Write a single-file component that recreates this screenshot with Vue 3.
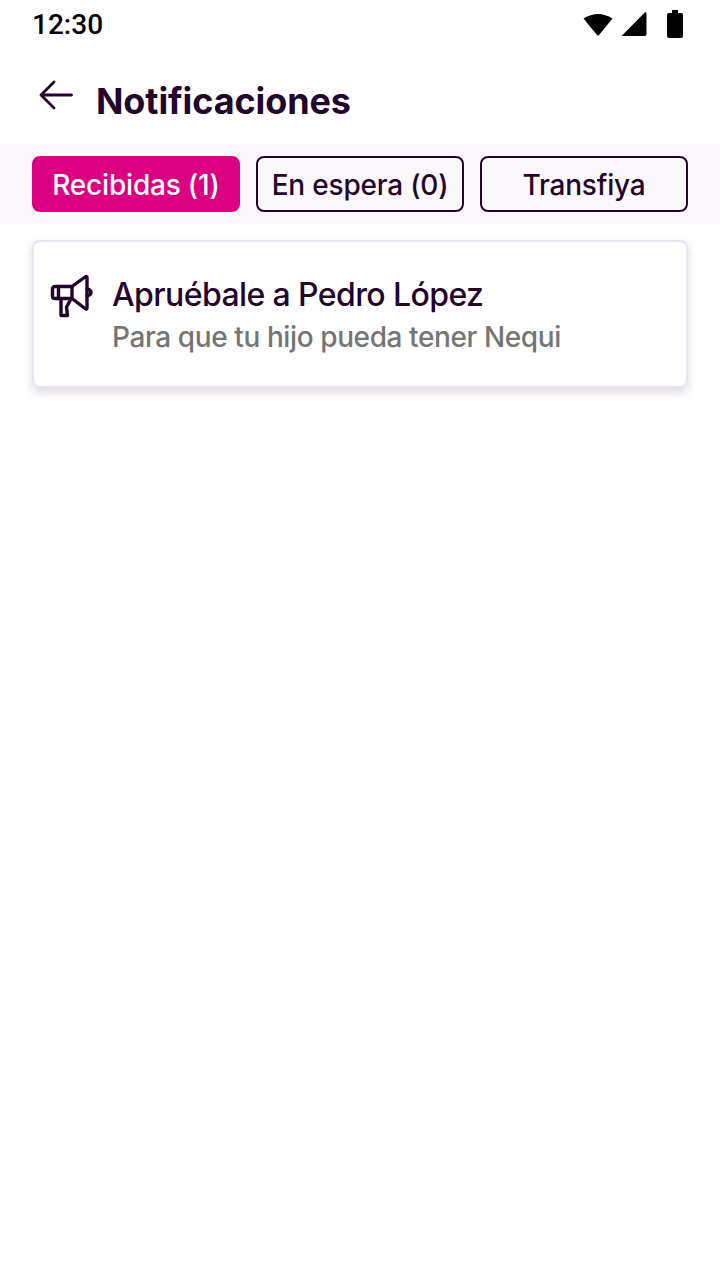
<template>
  <div class="screen">
    <!-- Status bar -->
    <div class="status">
      <span class="time">12:30</span>
      <div class="status-icons">
        <svg width="30" height="24" viewBox="0 0 30 24"><path d="M0.5 6.5Q15 -2.5 29.5 6.500L16 23Q15 24 14 23Z" fill="#000" /></svg>
        <svg class="signal" width="26" height="26" viewBox="0 0 26 26"><path d="M1 24.5L23.500 1.800Q25.500 0.500 25.500 3V23Q25.500 25 23.500 25H1.500Q0 25 1 24.500Z" fill="#000" /></svg>
        <svg width="16" height="28" viewBox="0 0 16 28"><path d="M5 0H11V3H14Q16 3 16 5V26Q16 28 14 28H2Q0 28 0 26V5Q0 3 2 3H5Z" fill="#000" /></svg>
      </div>
    </div>

    <!-- Header -->
    <div class="header">
      <svg class="back" width="36" height="30" viewBox="0 0 36 30">
        <path d="M33.500 15H3M16 2L3 15L16 28" fill="none" stroke="#23042c" stroke-width="2.800" stroke-linecap="round" stroke-linejoin="round" />
      </svg>
      <h1 class="title">Notificaciones</h1>
    </div>

    <!-- Tabs -->
    <div class="tabs">
      <button v-for="t in tabs" :key="t.label" class="tab" :class="{ active: t.active }">{{ t.label }}</button>
    </div>

    <!-- List -->
    <div class="list">
      <div class="card">
        <svg class="icon" width="52" height="52" viewBox="0 0 52 52" fill="none" stroke="#23042c" stroke-width="3.400" stroke-linejoin="round" stroke-linecap="round">
          <path d="M26 16.500H9Q6.500 16.500 6.500 19V26Q6.500 28.500 9 28.500H26Z" />
          <path d="M12.500 16.500V28.500" />
          <path d="M26 16.500L39 7Q41 5.500 41 7.500V38Q41 40 39 38.500L26 28.500" />
          <path d="M41 19Q45 20 45 22.500Q45 25 41 26" />
          <path d="M15 28.500V45.500H21.500L20.500 37L24.500 30" />
        </svg>
        <div class="copy">
          <div class="card-title">Apruébale a Pedro López</div>
          <div class="card-sub">Para que tu hijo pueda tener Nequi</div>
        </div>
      </div>
    </div>
  </div>
</template>

<script setup>
const tabs = [
  { label: 'Recibidas (1)', active: true },
  { label: 'En espera (0)', active: false },
  { label: 'Transfiya', active: false },
]
</script>

<style>
html,
body {
  margin: 0;
  background: #fff;
}
</style>

<style scoped>
.screen {
  width: 720px;
  height: 1280px;
  background: #fff;
  font-family: Inter, 'Noto Sans', sans-serif;
  color: #23042c;
  overflow: hidden;
}

.status {
  height: 48px;
  padding: 0 37px 0 32px;
  display: flex;
  justify-content: space-between;
  align-items: center;
}

.time {
  font-family: Roboto, sans-serif;
  font-size: 28px;
  font-weight: 500;
  color: #000;
}

.status-icons {
  display: flex;
  align-items: center;
  gap: 8px;
}

.signal {
  margin-right: 12px;
}

.header {
  height: 96px;
  display: flex;
  align-items: center;
  padding-left: 38px;
  gap: 22px;
}

.back {
  margin-top: -2px;
}

.title {
  margin: 10px 0 0;
  font-size: 36px;
  font-weight: 700;
  letter-spacing: -0.1px;
}

.tabs {
  height: 80px;
  box-sizing: border-box;
  padding: 12px 32px;
  display: flex;
  gap: 16px;
  background: #fbf8fb;
}

.tab {
  flex: 1;
  height: 56px;
  padding: 2px 0 0;
  border: 2px solid #23042c;
  border-radius: 8px;
  background: transparent;
  font-family: inherit;
  font-size: 28px;
  font-weight: 450;
  letter-spacing: -0.2px;
  color: #23042c;
}

.tab.active {
  background: #da0081;
  border-color: #da0081;
  color: #fff;
}

.list {
  padding: 16px 32px;
}

.card {
  height: 148px;
  box-sizing: border-box;
  display: flex;
  align-items: flex-start;
  gap: 14px;
  padding: 28px 12px 0;
  background: #fff;
  border: 2px solid #e8e4f2;
  border-radius: 8px;
  box-shadow: 0 4px 10px rgba(35, 4, 44, 0.16);
}

.copy {
  margin-top: 5px;
}

.card-title {
  font-size: 32px;
  font-weight: 450;
  letter-spacing: -0.6px;
  line-height: 40px;
}

.card-sub {
  font-size: 28px;
  font-weight: 450;
  letter-spacing: -0.4px;
  line-height: 44px;
  color: #757575;
}
</style>
